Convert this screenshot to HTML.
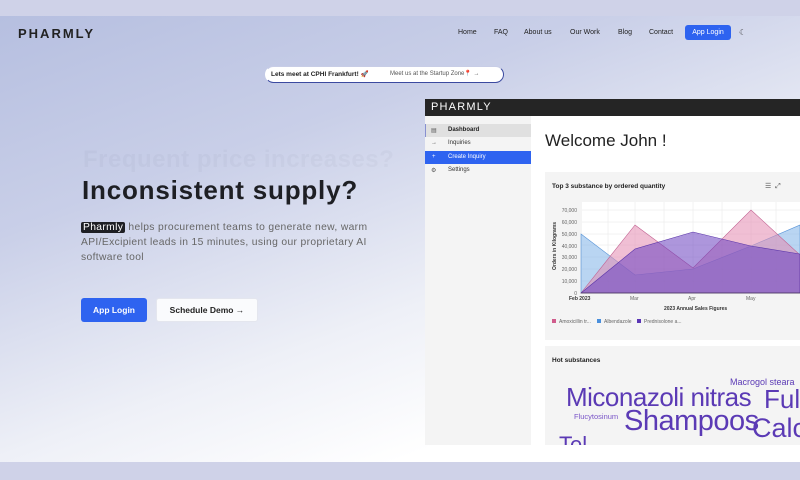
<!DOCTYPE html>
<html><head><meta charset="utf-8"><style>
*{margin:0;padding:0;box-sizing:border-box}
body{width:800px;height:480px;overflow:hidden;font-family:"Liberation Sans",sans-serif;position:relative;background:#fff}
.bg{position:absolute;left:0;top:16px;width:800px;height:446px;background:linear-gradient(160deg,#b6bfe0 0%,#c9cfe8 30%,#eef0f7 60%,#ffffff 80%)}
.band{position:absolute;left:0;width:800px;background:#cfd2e8}
.abs{position:absolute}
.nav a{position:absolute;font-size:7px;color:#222;top:29px}
</style></head><body>
<div class="band" style="top:0;height:16px"></div>
<div class="bg"></div>
<div class="band" style="top:462px;height:18px"></div>

<div class="abs" style="left:18px;top:26px;font-size:13px;font-weight:bold;letter-spacing:2px;color:#222">PHARMLY</div>
<div class="nav">
<a style="left:458px">Home</a><a style="left:494px">FAQ</a><a style="left:524px">About us</a><a style="left:570px">Our Work</a><a style="left:618px">Blog</a><a style="left:649px">Contact</a>
</div>
<div class="abs" style="left:685px;top:25px;width:46px;height:15px;background:#2e63f0;border-radius:3px;color:#fff;font-size:7px;line-height:15px;text-align:center">App Login</div>
<div class="abs" style="left:739px;top:28px;font-size:8px;color:#333">☾</div>

<div class="abs" style="left:265px;top:66px;width:239px;height:17px;background:#fff;border-radius:9px;border:1.5px solid #3b4aa0;border-left-color:#fff;border-top-color:#c8cde6"></div>
<div class="abs" style="left:271px;top:70px;font-size:6.5px;font-weight:bold;color:#222">Lets meet at CPHI Frankfurt! 🚀</div>
<div class="abs" style="left:390px;top:70px;font-size:6px;color:#555">Meet us at the Startup Zone📍 →</div>

<div class="abs" style="left:83px;top:146px;font-size:24px;letter-spacing:0.5px;font-weight:bold;color:rgba(40,40,60,0.03);white-space:nowrap">Frequent price increases?</div>
<div class="abs" style="left:82px;top:175px;font-size:26px;letter-spacing:0.8px;font-weight:bold;color:#1e1f24;white-space:nowrap">Inconsistent supply?</div>
<div class="abs" style="left:81px;top:220px;width:315px;font-size:10.3px;letter-spacing:0.35px;line-height:15px;color:#666"><span style="background:#1e1f24;color:#fff;padding:0 2px;border-radius:2px">Pharmly</span> helps procurement teams to generate new, warm API/Excipient leads in 15 minutes, using our proprietary AI software tool</div>
<div class="abs" style="left:81px;top:298px;width:66px;height:24px;background:#2e63f0;border-radius:3px;color:#fff;font-size:8.5px;line-height:24px;text-align:center;font-weight:bold">App Login</div>
<div class="abs" style="left:156px;top:298px;width:102px;height:24px;background:#fafbfd;border:1px solid #e4e6ee;border-radius:3px;color:#222;font-size:8.5px;line-height:22px;text-align:center;font-weight:bold">Schedule Demo →</div>

<div class="abs" style="left:425px;top:99px;width:375px;height:346px;background:#fff;overflow:hidden">
 <div class="abs" style="left:0;top:0;width:375px;height:17px;background:#252525"></div>
 <div class="abs" style="left:6px;top:2px;font-size:11px;color:#fff;letter-spacing:1.2px">PHARMLY</div>
 <div class="abs" style="left:0;top:17px;width:106px;height:329px;background:#f4f4f4"></div>
 <div class="abs" style="left:0;top:25px;width:106px;height:13px;background:#e0e0e0;border-left:1px solid #8890d0"></div>
 <div class="abs" style="left:0;top:52px;width:106px;height:13px;background:#2e63f0"></div>
 <div class="abs" style="left:6px;top:28px;font-size:6px;color:#555">▤</div>
 <div class="abs" style="left:23px;top:28px;font-size:6px;color:#222;font-weight:bold">Dashboard</div>
 <div class="abs" style="left:6px;top:41px;font-size:6px;color:#555">→</div>
 <div class="abs" style="left:23px;top:41px;font-size:6px;color:#333">Inquiries</div>
 <div class="abs" style="left:7px;top:55px;font-size:6px;color:#fff">+</div>
 <div class="abs" style="left:23px;top:55px;font-size:6px;color:#fff">Create Inquiry</div>
 <div class="abs" style="left:6px;top:68px;font-size:6px;color:#555">⚙</div>
 <div class="abs" style="left:23px;top:68px;font-size:6px;color:#333">Settings</div>

 <div class="abs" style="left:120px;top:32px;font-size:17px;color:#222">Welcome John !</div>
 <div class="abs" style="left:120px;top:73px;width:255px;height:168px;background:#f4f4f4"></div>
 <div class="abs" style="left:127px;top:84px;font-size:6.5px;font-weight:bold;color:#222">Top 3 substance by ordered quantity</div>
 <div class="abs" style="left:340px;top:83px;font-size:7px;color:#555">☰&nbsp;&nbsp;⤢</div>
 <div class="abs" style="left:120px;top:247px;width:255px;height:100px;background:#f4f4f4"></div>
 <div class="abs" style="left:127px;top:258px;font-size:6.5px;font-weight:bold;color:#222">Hot substances</div>
 <div class="abs" style="left:305px;top:278px;font-size:9px;color:#5b3ab5;white-space:nowrap">Macrogol steara</div>
 <div class="abs" style="left:141px;top:283px;font-size:26px;color:#5b3ab5;white-space:nowrap;letter-spacing:-0.5px">Miconazoli nitras</div>
 <div class="abs" style="left:339px;top:285px;font-size:26px;color:#5b3ab5">Ful</div>
 <div class="abs" style="left:149px;top:313px;font-size:7.5px;color:#7a55c8">Flucytosinum</div>
 <div class="abs" style="left:199px;top:306px;font-size:29px;color:#5b3ab5;letter-spacing:-0.5px">Shampoos</div>
 <div class="abs" style="left:327px;top:314px;font-size:27px;color:#5b3ab5">Calc</div>
 <div class="abs" style="left:134px;top:333px;font-size:22px;color:#5b3ab5">Tel</div>
</div>
<svg class="abs" style="left:0;top:0" width="800" height="480">
 <g font-family="Liberation Sans" font-size="5" fill="#666" text-anchor="end">
  <text x="577" y="212">70,000</text><text x="577" y="224">60,000</text><text x="577" y="236">50,000</text><text x="577" y="248">40,000</text><text x="577" y="259">30,000</text><text x="577" y="271">20,000</text><text x="577" y="283">10,000</text><text x="577" y="295">0</text>
 </g>
 <rect x="582" y="202" width="218" height="91" fill="#fff"/>
 <g stroke="#e6e6e6" stroke-width="0.5">
  <line x1="582" y1="210" x2="800" y2="210"/><line x1="582" y1="222" x2="800" y2="222"/><line x1="582" y1="234" x2="800" y2="234"/><line x1="582" y1="245" x2="800" y2="245"/><line x1="582" y1="257" x2="800" y2="257"/><line x1="582" y1="269" x2="800" y2="269"/><line x1="582" y1="281" x2="800" y2="281"/>
  <line x1="608" y1="202" x2="608" y2="293"/><line x1="635" y1="202" x2="635" y2="293"/><line x1="664" y1="202" x2="664" y2="293"/><line x1="693" y1="202" x2="693" y2="293"/><line x1="722" y1="202" x2="722" y2="293"/><line x1="751" y1="202" x2="751" y2="293"/><line x1="776" y1="202" x2="776" y2="293"/>
 </g>
 <polygon points="581,293 581,234 635,275 693,269 751,246 800,225 800,293" fill="#7fb2e8" fill-opacity="0.55" stroke="#5a95d8" stroke-width="0.6"/>
 <polygon points="581,293 635,225 693,268 751,210 800,255 800,293" fill="#e38ab0" fill-opacity="0.55" stroke="#c06090" stroke-width="0.6"/>
 <polygon points="581,293 635,249 693,232 751,246 800,254 800,293" fill="#6a3fc0" fill-opacity="0.55" stroke="#5a35a8" stroke-width="0.6"/>
 <line x1="581" y1="293" x2="800" y2="293" stroke="#333" stroke-width="0.6"/>
 <g font-family="Liberation Sans" font-size="5" fill="#666">
  <text x="569" y="300" font-weight="bold" fill="#333">Feb 2023</text><text x="630" y="300">Mar</text><text x="688" y="300">Apr</text><text x="746" y="300">May</text>
  <text x="664" y="310" font-weight="bold" fill="#333">2023 Annual Sales Figures</text>
  <text x="556" y="270" font-weight="bold" fill="#333" transform="rotate(-90 556 270)">Orders in Kilograms</text>
  <rect x="552" y="319" width="4" height="4" fill="#d05c8c"/><text x="559" y="323">Amoxicillin tr...</text>
  <rect x="597" y="319" width="4" height="4" fill="#4a8fdc"/><text x="604" y="323">Albendazole</text>
  <rect x="637" y="319" width="4" height="4" fill="#5a35b5"/><text x="644" y="323">Prednisolone a...</text>
 </g>
</svg>
</body></html>
